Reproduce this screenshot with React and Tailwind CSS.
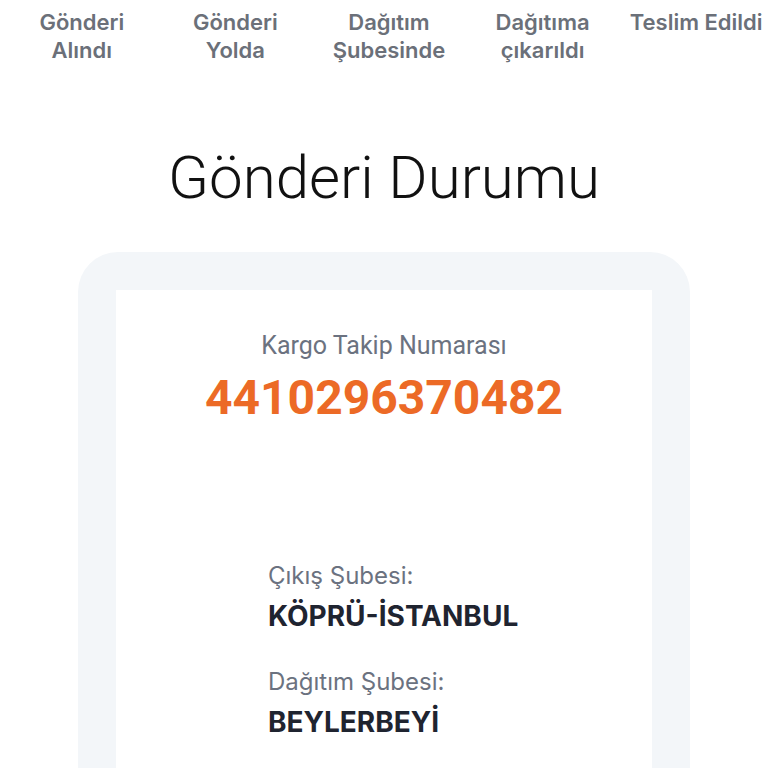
import React from 'react';

const steps = [
  ['Gönderi', 'Alındı'],
  ['Gönderi', 'Yolda'],
  ['Dağıtım', 'Şubesinde'],
  ['Dağıtıma', 'çıkarıldı'],
  ['Teslim Edildi'],
];

const branches = [
  { label: 'Çıkış Şubesi:', value: 'KÖPRÜ-İSTANBUL' },
  { label: 'Dağıtım Şubesi:', value: 'BEYLERBEYİ' },
];

export default function App() {
  return (
    <div className="h-[768px] overflow-hidden bg-white font-['Inter',sans-serif]">
      <div className="grid grid-cols-[repeat(5,153.6px)] pl-[5px] pt-[8px]">
        {steps.map((lines, i) => (
          <div key={i} className="text-center text-[22px] font-semibold leading-[28px] text-[#6b7079]">
            {lines.map((l) => (
              <div key={l} className="whitespace-nowrap">{l}</div>
            ))}
          </div>
        ))}
      </div>

      <h1 className="mt-[80px] text-center font-['Roboto',sans-serif] text-[60px] font-light leading-[68px] text-[#111]">
        Gönderi Durumu
      </h1>

      <div className="mx-[78px] mt-[40px] h-[600px] rounded-[40px] bg-[#f3f6f9] px-[38px] pt-[38px]">
        <div className="h-full bg-white">
          <div className="pt-[40px] text-center font-['Roboto',sans-serif]">
            <p className="text-[25px] leading-[32px] text-[#6b7280]">Kargo Takip Numarası</p>
            <p className="mt-[8px] text-[48px] font-bold leading-[56px] text-[#ec6a26]">4410296370482</p>
          </div>

          <div className="mt-[135px] pl-[152px]">
            {branches.map((b) => (
              <div key={b.label} className="mb-[34px]">
                <p className="text-[24px] leading-[30px] text-[#6b7280]">{b.label}</p>
                <p className="mt-[8px] text-[28px] font-bold leading-[34px] text-[#1f2430]">{b.value}</p>
              </div>
            ))}
          </div>
        </div>
      </div>
    </div>
  );
}
